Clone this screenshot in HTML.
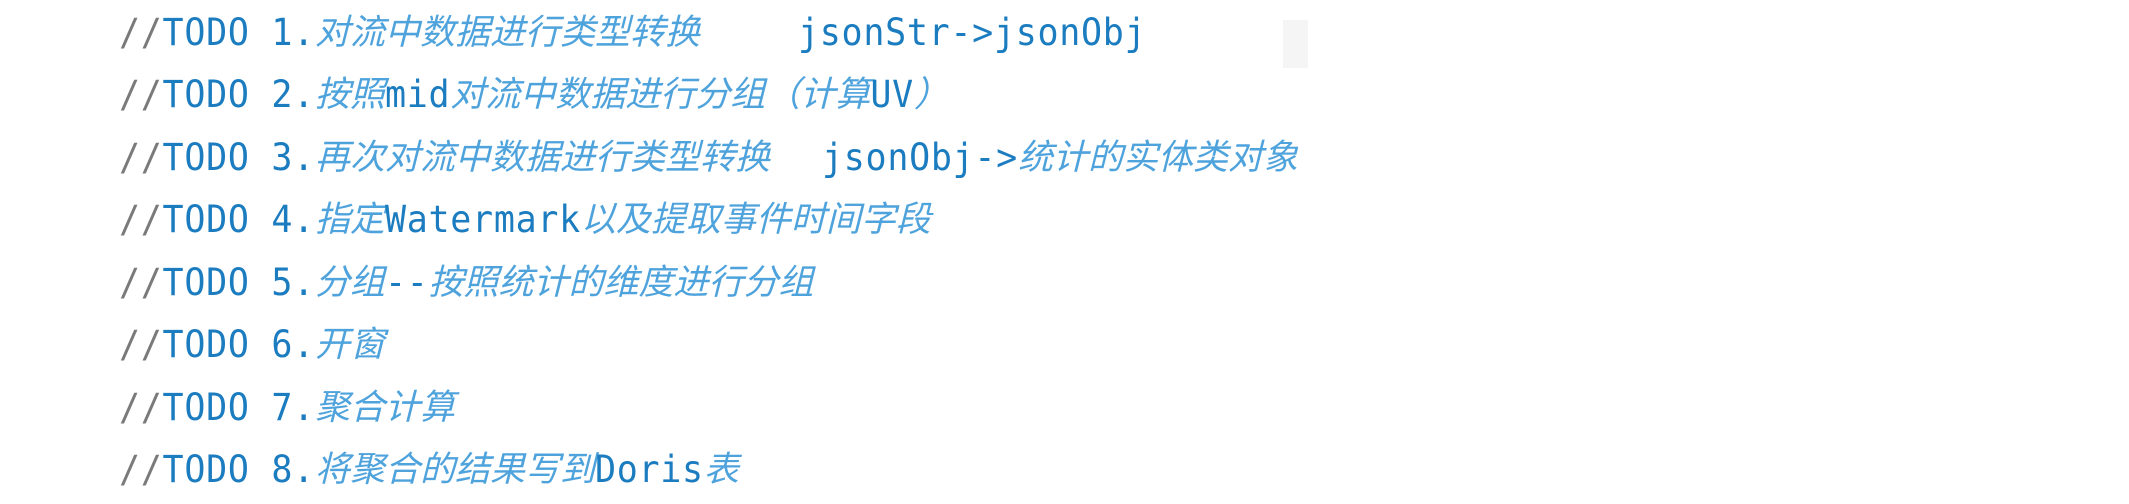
<!DOCTYPE html>
<html><head><meta charset="utf-8"><style>
html,body{margin:0;padding:0;background:#fff;width:2129px;height:504px;overflow:hidden;position:relative}
.l{position:absolute;left:119px;height:62px;line-height:62px;white-space:nowrap}
.m{font-family:"DejaVu Sans Mono","Liberation Mono",monospace;font-size:35px;letter-spacing:0.7px;color:#1b7cc0;font-style:normal;display:inline-block;transform:scaleY(1.08)}
.g{color:#7a7a7a}
.c{font-family:"Liberation Sans","Noto Sans CJK SC",sans-serif;font-size:35px;color:#4fa3dc;font-style:italic}
.a{position:absolute;top:0}
</style></head><body>
<div class="l" style="top:2px"><span class="m"><span class="g">//</span>TODO 1.</span><span class="c">对流中数据进行类型转换</span><span class="m a" style="left:679px">jsonStr-&gt;jsonObj</span></div>
<div style="position:absolute;left:1283px;top:20px;width:25px;height:48px;background:#f5f5f5"></div>
<div class="l" style="top:64px"><span class="m"><span class="g">//</span>TODO 2.</span><span class="c">按照</span><span class="m">mid</span><span class="c">对流中数据进行分组（计算</span><span class="m">UV</span><span class="c">）</span></div>
<div class="l" style="top:127px"><span class="m"><span class="g">//</span>TODO 3.</span><span class="c">再次对流中数据进行类型转换</span><span class="a" style="left:703px;white-space:nowrap"><span class="m">jsonObj-&gt;</span><span class="c">统计的实体类对象</span></span></div>
<div class="l" style="top:189px"><span class="m"><span class="g">//</span>TODO 4.</span><span class="c">指定</span><span class="m">Watermark</span><span class="c">以及提取事件时间字段</span></div>
<div class="l" style="top:252px"><span class="m"><span class="g">//</span>TODO 5.</span><span class="c">分组</span><span class="m">--</span><span class="c">按照统计的维度进行分组</span></div>
<div class="l" style="top:314px"><span class="m"><span class="g">//</span>TODO 6.</span><span class="c">开窗</span></div>
<div class="l" style="top:377px"><span class="m"><span class="g">//</span>TODO 7.</span><span class="c">聚合计算</span></div>
<div class="l" style="top:439px"><span class="m"><span class="g">//</span>TODO 8.</span><span class="c">将聚合的结果写到</span><span class="m">Doris</span><span class="c">表</span></div>
</body></html>
